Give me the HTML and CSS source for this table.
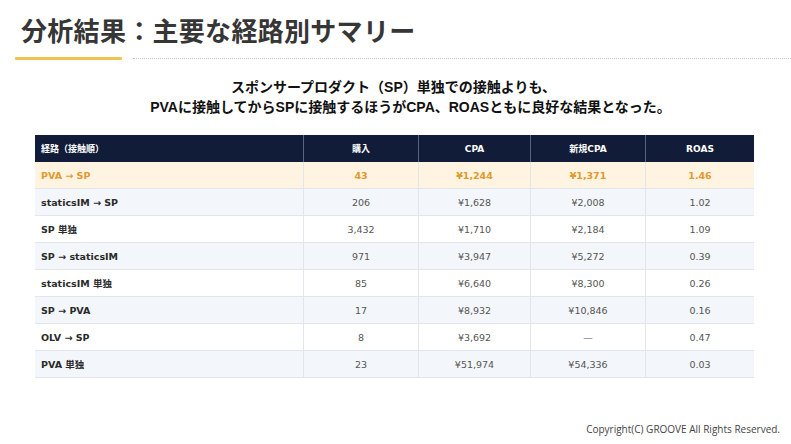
FILE: index.html
```html
<!DOCTYPE html>
<html lang="ja">
<head>
<meta charset="utf-8">
<link rel="stylesheet" href="styles.css">
</head>
<body>
<div class="slide">
  <header class="head">
    <h1 class="title">分析結果：主要な経路別サマリー</h1>
    <div class="rule"><span class="rule-accent"></span><span class="rule-dots"></span></div>
  </header>
  <div class="lead">
    <p class="lead-line lead-first">スポンサープロダクト（SP）単独での接触よりも、</p>
    <p class="lead-line">PVAに接触してからSPに接触するほうがCPA、ROASともに良好な結果となった。</p>
  </div>
  <table class="summary">
    <thead>
      <tr><th class="c-route">経路（接触順）</th><th>購入</th><th>CPA</th><th>新規CPA</th><th>ROAS</th></tr>
    </thead>
    <tbody>
      <tr class="best"><td class="c-route">PVA → SP</td><td>43</td><td>¥1,244</td><td>¥1,371</td><td>1.46</td></tr>
      <tr><td class="c-route">staticsIM → SP</td><td>206</td><td>¥1,628</td><td>¥2,008</td><td>1.02</td></tr>
      <tr><td class="c-route">SP 単独</td><td>3,432</td><td>¥1,710</td><td>¥2,184</td><td>1.09</td></tr>
      <tr><td class="c-route">SP → staticsIM</td><td>971</td><td>¥3,947</td><td>¥5,272</td><td>0.39</td></tr>
      <tr><td class="c-route">staticsIM 単独</td><td>85</td><td>¥6,640</td><td>¥8,300</td><td>0.26</td></tr>
      <tr><td class="c-route">SP → PVA</td><td>17</td><td>¥8,932</td><td>¥10,846</td><td>0.16</td></tr>
      <tr><td class="c-route">OLV → SP</td><td>8</td><td>¥3,692</td><td>—</td><td>0.47</td></tr>
      <tr><td class="c-route">PVA 単独</td><td>23</td><td>¥51,974</td><td>¥54,336</td><td>0.03</td></tr>
    </tbody>
  </table>
  <footer class="foot">Copyright(C) GROOVE All Rights Reserved.</footer>
</div>
</body>
</html>
```

FILE: styles.css
```css
html, body {
  margin: 0;
  padding: 0;
  background: #ffffff;
}
.slide {
  width: 791px;
  height: 444px;
  position: relative;
  overflow: hidden;
  font-family: "Noto Sans CJK JP", "Noto Sans", sans-serif;
}
.head {
  padding: 12px 0 0 15px;
}
.title {
  margin: 0 0 0 6px;
  font-size: 26px;
  line-height: 36px;
  font-weight: 700;
  color: #363636;
  letter-spacing: 0.3px;
}
.rule {
  display: flex;
  align-items: center;
  margin-top: 9px;
  gap: 11px;
}
.rule-accent {
  width: 107px;
  height: 3px;
  background: #f0c24e;
  border-radius: 1px;
}
.rule-dots {
  flex: 1;
  border-top: 1px dotted #c8c8c8;
}
.lead {
  margin-top: 17px;
  padding-left: 30px;
  text-align: center;
  font-family: "Liberation Sans", "Noto Sans CJK JP", sans-serif;
  font-weight: 700;
  font-size: 14px;
  line-height: 20px;
  color: #111111;
}
.lead-line {
  margin: 0;
}
.lead-first {
  padding-right: 34px;
}
.summary {
  margin: 18px 0 0 35px;
  width: 719px;
  border-collapse: collapse;
  table-layout: fixed;
  font-family: "DejaVu Sans", "Noto Sans CJK JP", sans-serif;
  font-size: 9.5px;
  color: #555555;
}
.summary th {
  background: #101c38;
  color: #ffffff;
  font-weight: 700;
  height: 27px;
  padding: 0;
  text-align: center;
  border-right: 1px solid #5a6580;
  font-size: 9px;
}
.summary th:last-child {
  border-right: none;
}
.summary th.c-route {
  width: 262px;
  text-align: left;
  padding-left: 6px;
}
.summary th:nth-child(2) { width: 114px; }
.summary th:nth-child(3) { width: 111px; }
.summary th:nth-child(4) { width: 114px; }
.summary td {
  height: 26px;
  padding: 0;
  text-align: center;
  border: 1px solid #e2e6ec;
  border-top: none;
}
.summary td:first-child { border-left: none; }
.summary td:last-child { border-right: none; }
.summary td.c-route {
  text-align: left;
  padding-left: 6px;
  font-weight: 700;
  color: #2a2a2a;
}
.summary tbody tr:nth-child(even) td {
  background: #f3f6fa;
}
.summary tbody tr.best td {
  background: #fff3e2;
  color: #e29a2c;
  font-weight: 700;
}
.foot {
  position: absolute;
  right: 11px;
  bottom: 8px;
  font-family: "Open Sans", sans-serif;
  font-size: 10px;
  color: #444444;
}
```
